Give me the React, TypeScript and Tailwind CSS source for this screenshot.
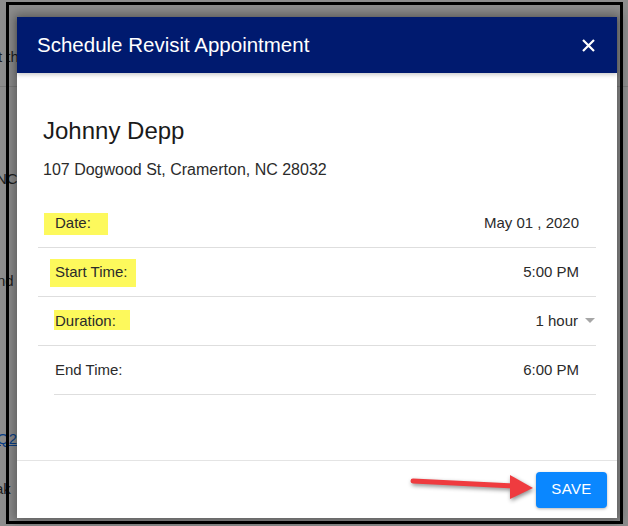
import { FC } from "react";

interface RowProps {
    label: string;
    value: string;
    highlight?: string;
    dropdown?: boolean;
    inset?: boolean;
}

const Row: FC<RowProps> = ({ label, value, highlight, dropdown, inset }) => {
    return (
        <div
            className={`relative flex h-[49px] items-center justify-between border-b border-[#dedede] pr-[17px] ${
                inset ? "ml-[16px] pl-[1px]" : "pl-[17px]"
            }`}
        >
            {highlight && <div className={`absolute bg-[#fdf95c] ${highlight}`} />}
            <span className="relative text-[15px] text-[#2b2b2b]">{label}</span>
            <span className="flex items-center text-[15px] text-[#2b2b2b]">
                {value}
                {dropdown && (
                    <svg width="10" height="6" viewBox="0 0 10 6" className="ml-[7px] mr-[-16px]">
                        <path d="M0 0h10L5 5z" fill="#a6a6a6" />
                    </svg>
                )}
            </span>
        </div>
    );
};

const App: FC = () => {
    return (
        <div
            className="relative h-[526px] w-[628px] overflow-hidden bg-[#8d8d8d]"
            style={{ fontFamily: '"Liberation Sans", Arial, sans-serif' }}
        >
            {/* page behind the overlay */}
            <div className="text-[15px] text-[#1e1e1e]">
                <div className="absolute left-[-2px] top-[46px]">t th</div>
                <div className="absolute left-0 top-[86px] h-px w-full bg-[#7c7c7c]" />
                <div className="absolute left-[-4px] top-[168px]">NC</div>
                <div className="absolute left-[-3px] top-[270px]">nd</div>
                <div className="absolute left-[-3px] top-[428px] text-[#0a3f86] underline">Q2</div>
                <div className="absolute left-[-5px] top-[478px]">ak</div>
            </div>

            {/* modal */}
            <div className="absolute left-[17px] top-[17px] flex h-[501px] w-[600px] flex-col bg-white shadow-[0_0_10px_3px_rgba(0,0,0,0.35)]">
                <div className="flex h-[56px] items-center justify-between bg-[#001a6f] pl-[20px] pr-[22px] shadow-[0_2px_4px_rgba(0,0,0,0.2)]">
                    <span className="text-[20.5px] text-white">Schedule Revisit Appointment</span>
                    <svg width="13" height="13" viewBox="0 0 13 13">
                        <path d="M1 1l11 11M12 1L1 12" stroke="white" strokeWidth="2.2" />
                    </svg>
                </div>

                <div className="flex-1 px-[21px]">
                    <div className="pl-[5px] pt-[44px]">
                        <div className="text-[24px] leading-[28px] text-[#1a1a1a]">Johnny Depp</div>
                        <div className="mt-[13px] text-[16px] text-[#2b2b2b]">
                            107 Dogwood St, Cramerton, NC 28032
                        </div>
                    </div>
                    <div className="mt-[17px]">
                        <Row label="Date:" value="May 01 , 2020" highlight="left-[6px] top-[14px] h-[22px] w-[64px]" />
                        <Row label="Start Time:" value="5:00 PM" highlight="left-[12px] top-[11px] h-[28px] w-[86px]" />
                        <Row label="Duration:" value="1 hour" dropdown highlight="left-[16px] top-[13px] h-[20px] w-[76px]" />
                        <Row label="End Time:" value="6:00 PM" inset />
                    </div>
                </div>

                <div className="flex h-[58px] items-center justify-end border-t border-[#e4e4e4] pr-[10px]">
                    <button className="h-[36px] w-[71px] rounded-[4px] bg-[#0a87ff] text-[15px] font-medium tracking-wide text-white shadow-[0_1px_3px_rgba(0,0,0,0.3)]">
                        SAVE
                    </button>
                </div>
            </div>

            {/* red arrow annotation */}
            <svg
                className="absolute left-0 top-0"
                width="628"
                height="526"
                viewBox="0 0 628 526"
                style={{ filter: "drop-shadow(1px 2px 2px rgba(0,0,0,0.45))" }}
            >
                <path d="M413 481L514 486" stroke="#ef3b3f" strokeWidth="5" strokeLinecap="round" />
                <path d="M510 475L533 488L510 499z" fill="#ef3b3f" />
            </svg>

            {/* black frame */}
            <div className="pointer-events-none absolute left-[6px] top-[2px] h-[522px] w-[617px] border-[3px] border-black" />
        </div>
    );
};

export default App;
